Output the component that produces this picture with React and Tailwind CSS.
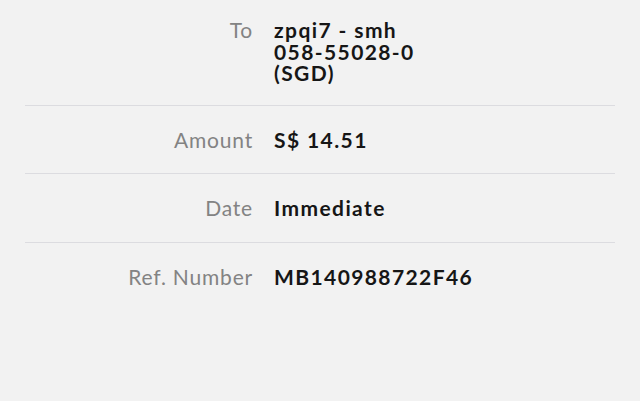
import React from "react";

const rows = [
  { label: "To", value: ["zpqi7 - smh", "058-55028-0", "(SGD)"] },
  { label: "Amount", value: ["S$ 14.51"] },
  { label: "Date", value: ["Immediate"] },
  { label: "Ref. Number", value: ["MB140988722F46"] },
];

function Row({ label, value, first, last }) {
  return (
    <div
      className={
        "flex gap-[21px] " +
        (first ? "pt-[19px] pb-[21px] " : "py-[23px] ") +
        (last ? "" : "border-b border-[#dcdce0]")
      }
    >
      <div className="w-[228px] text-right text-[21px] leading-[21px] tracking-[0.8px] text-[#838383]">
        {label}
      </div>
      <div className="flex-1 text-[21px] leading-[21.5px] font-bold tracking-[1.4px] text-[#161616]">
        {value.map((v) => (
          <div key={v}>{v}</div>
        ))}
      </div>
    </div>
  );
}

export default function App() {
  return (
    <div
      className="w-[640px] h-[401px] bg-[#f2f2f2] px-[25px] overflow-hidden"
      style={{ fontFamily: "Lato, 'Open Sans', sans-serif" }}
    >
      {rows.map((r, i) => (
        <Row
          key={r.label}
          label={r.label}
          value={r.value}
          first={i === 0}
          last={i === rows.length - 1}
        />
      ))}
    </div>
  );
}
